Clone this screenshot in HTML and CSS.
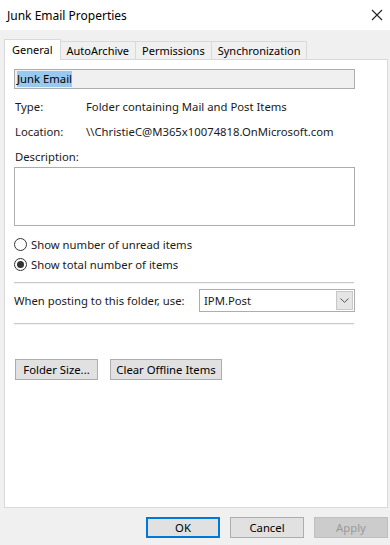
FILE: index.html
```html
<!DOCTYPE html>
<html lang="en">
<head>
  <meta charset="UTF-8"/>
  <title>Junk Email Properties</title>
  <link rel="stylesheet" href="styles.css">
</head>
<body>
  <div class="window">
    <div class="titlebar">
      <span class="title">Junk Email Properties</span>
      <svg class="close" width="12" height="12" viewBox="0 0 12 12"><path d="M1 1 L11 11 M11 1 L1 11" stroke="#222" stroke-width="1.1" fill="none"/></svg>
    </div>

    <div class="content">
      <div class="tabs">
        <div class="tab active">General</div>
        <div class="tab">AutoArchive</div>
        <div class="tab">Permissions</div>
        <div class="tab">Synchronization</div>
      </div>

      <div class="panel">
        <div class="name-field"><span class="selected">Junk Email</span></div>

        <div class="info-row">
          <span class="label">Type:</span>
          <span>Folder containing Mail and Post Items</span>
        </div>
        <div class="info-row">
          <span class="label">Location:</span>
          <span>\\ChristieC@M365x10074818.OnMicrosoft.com</span>
        </div>
        <div class="info-row desc-label">Description:</div>
        <div class="textarea"></div>

        <div class="radios">
          <label class="radio"><span class="dot"></span>Show number of unread items</label>
          <label class="radio"><span class="dot checked"></span>Show total number of items</label>
        </div>

        <hr class="sep">
        <div class="posting">
          <span>When posting to this folder, use:</span>
          <div class="select">
            <span>IPM.Post</span>
            <span class="arrow">
              <svg width="9" height="5" viewBox="0 0 9 5"><path d="M0.5 0.5 L4.5 4.3 L8.5 0.5" stroke="#555" stroke-width="1" fill="none"/></svg>
            </span>
          </div>
        </div>
        <hr class="sep">

        <div class="actions">
          <button class="btn size-btn">Folder Size...</button>
          <button class="btn clear-btn">Clear Offline Items</button>
        </div>
      </div>

      <div class="footer">
        <button class="btn wide default">OK</button>
        <button class="btn wide">Cancel</button>
        <button class="btn wide disabled">Apply</button>
      </div>
    </div>
  </div>
</body>
</html>
```

FILE: styles.css
```css
* {
  margin: 0;
  padding: 0;
  box-sizing: border-box;
}

body {
  width: 390px;
  height: 545px;
  overflow: hidden;
  font-family: 'Noto Sans', 'Open Sans', sans-serif;
  font-size: 11.3px;
  color: #1a1a1a;
  background: #f0f0f0;
}

.window {
  height: 545px;
  display: flex;
  flex-direction: column;
}

.titlebar {
  height: 30px;
  background: #fff;
  display: flex;
  align-items: center;
  justify-content: space-between;
  padding: 0 7px 0 7px;
}

.title {
  font-size: 12px;
  color: #000;
}

.content {
  flex: 1;
  padding: 8px 2px 0 4px;
  display: flex;
  flex-direction: column;
}

.tabs {
  display: flex;
  align-items: flex-end;
  height: 21px;
  position: relative;
  z-index: 1;
}

.tab {
  height: 18px;
  padding: 0 6px;
  border: 1px solid #d9d9d9;
  border-bottom: none;
  border-left: none;
  background: #f0f0f0;
  display: flex;
  align-items: center;
  font-size: 11px;
  color: #000;
}

.tab.active {
  height: 21px;
  background: #fff;
  border-left: 1px solid #d9d9d9;
  padding: 0 7px 2px 7px;
  margin-bottom: -1px;
}

.panel {
  height: 449px;
  background: #fff;
  border: 1px solid #d9d9d9;
  padding: 9px 0 0 9px;
  display: flex;
  flex-direction: column;
}

.name-field {
  width: 341px;
  height: 20px;
  background: #f0f0f0;
  border: 1px solid #adadad;
  padding: 1px 2px;
  display: flex;
  align-items: center;
}

.selected {
  background: #99c9ef;
  color: #000;
  line-height: 16px;
}

.info-row {
  display: flex;
  margin-top: 10px;
  line-height: 15px;
}

.info-row:first-of-type {
  margin-top: 11px;
}

.label {
  width: 72px;
  padding-left: 1px;
}

.desc-label {
  padding-left: 1px;
}

.textarea {
  width: 341px;
  height: 59px;
  margin-top: 3px;
  border: 1px solid #adadad;
  background: #fff;
}

.radios {
  display: flex;
  flex-direction: column;
  gap: 5px;
  margin-top: 11px;
}

.radio {
  display: flex;
  align-items: center;
  gap: 4px;
  height: 15px;
}

.dot {
  width: 13px;
  height: 13px;
  border: 1px solid #333;
  border-radius: 50%;
  background: #fff;
  display: flex;
  align-items: center;
  justify-content: center;
}

.dot.checked::after {
  content: '';
  width: 7px;
  height: 7px;
  border-radius: 50%;
  background: #333;
}

.sep {
  width: 340px;
  border: none;
  border-top: 1px solid #c8c8c8;
  border-bottom: 1px solid #f4f4f4;
}

.radios + .sep {
  margin-top: 10px;
}

.posting {
  display: flex;
  align-items: center;
  justify-content: space-between;
  width: 341px;
  margin: 5px 0 11px 0;
}

.select {
  width: 156px;
  height: 23px;
  border: 1px solid #adadad;
  display: flex;
  align-items: center;
  justify-content: space-between;
  padding-left: 4px;
}

.arrow {
  width: 17px;
  height: 19px;
  margin-right: 1px;
  background: #e5e5e5;
  border: 1px solid #c8c8c8;
  display: flex;
  align-items: center;
  justify-content: center;
}

.actions {
  display: flex;
  gap: 12px;
  margin-top: 34px;
  padding-left: 1px;
}

.btn {
  height: 21px;
  padding: 0 8px;
  border: 1px solid #adadad;
  background: #e1e1e1;
  font-family: inherit;
  font-size: 11.3px;
  color: #000;
}

.size-btn {
  width: 83px;
  padding: 0;
}

.clear-btn {
  width: 112px;
  padding: 0;
}

.footer {
  display: flex;
  justify-content: flex-end;
  gap: 10px;
  padding-top: 9px;
  padding-right: 0;
}

.btn.wide {
  width: 74px;
  padding: 0;
}

.btn.default {
  border: 2px solid #0078d7;
}

.btn.disabled {
  background: #cccccc;
  border-color: #bfbfbf;
  color: #9a9a9a;
}
```
